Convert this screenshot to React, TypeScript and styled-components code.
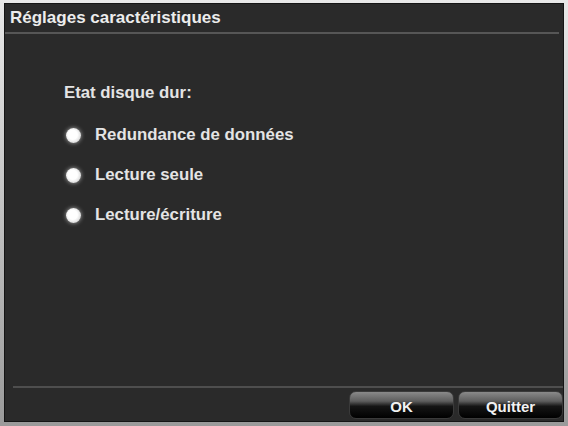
import styled, { createGlobalStyle } from "styled-components";

const GlobalStyle = createGlobalStyle`
  html, body {
    margin: 0;
    padding: 0;
    background: #cfcfcf;
  }
  body {
    font-family: "Liberation Sans", Arial, sans-serif;
  }
`;

const Screen = styled.div`
  width: 568px;
  height: 426px;
  box-sizing: border-box;
  padding: 3px 4px 4px 4px;
  background: linear-gradient(#e8e8e8, #9a9a9a);
`;

const Dialog = styled.div`
  height: 100%;
  box-sizing: border-box;
  background: #2a2a2a;
  border: 1px solid #151515;
  display: flex;
  flex-direction: column;
`;

const TitleBar = styled.div`
  height: 28px;
  padding: 0 5px;
  display: flex;
  align-items: center;
  color: #ececec;
  font-size: 17px;
  font-weight: bold;
  border-bottom: 2px solid #565656;
  margin-right: 4px;
`;

const Body = styled.div`
  flex: 1;
  padding: 49px 0 0 59px;
  display: flex;
  flex-direction: column;
`;

const Heading = styled.div`
  color: #e4e4e4;
  font-size: 16.8px;
  font-weight: bold;
  margin-bottom: 12px;
`;

const Option = styled.label`
  display: flex;
  align-items: center;
  gap: 14px;
  height: 40px;
  color: #e4e4e4;
  font-size: 16.8px;
  font-weight: bold;
`;

const Radio = styled.span`
  width: 15px;
  height: 15px;
  border-radius: 50%;
  background: radial-gradient(circle at 45% 45%, #ffffff 40%, #d6d6d6 75%, #a0a0a0 100%);
  box-shadow: 0 0 4px rgba(255, 255, 255, 0.6);
  margin-left: 2px;
`;

const Footer = styled.div`
  border-top: 2px solid #4e4e4e;
  margin-left: 8px;
  height: 33px;
  display: flex;
  justify-content: flex-end;
  align-items: center;
  gap: 4px;
`;

const Button = styled.button`
  width: 105px;
  height: 28px;
  border: 1px solid #3a3a3a;
  border-radius: 7px;
  background: linear-gradient(#8a8a8a 0%, #5e5e5e 35%, #151515 55%, #000000 100%);
  color: #f2f2f2;
  font-family: "Liberation Sans", Arial, sans-serif;
  font-size: 15px;
  font-weight: bold;
  padding: 3px 0 0 0;
`;

const options = ["Redundance de données", "Lecture seule", "Lecture/écriture"];

export default function App() {
  return (
    <>
      <GlobalStyle />
      <Screen>
        <Dialog>
          <TitleBar>Réglages caractéristiques</TitleBar>
          <Body>
            <Heading>Etat disque dur:</Heading>
            {options.map((o) => (
              <Option key={o}>
                <Radio />
                {o}
              </Option>
            ))}
          </Body>
          <Footer>
            <Button>OK</Button>
            <Button>Quitter</Button>
          </Footer>
        </Dialog>
      </Screen>
    </>
  );
}
